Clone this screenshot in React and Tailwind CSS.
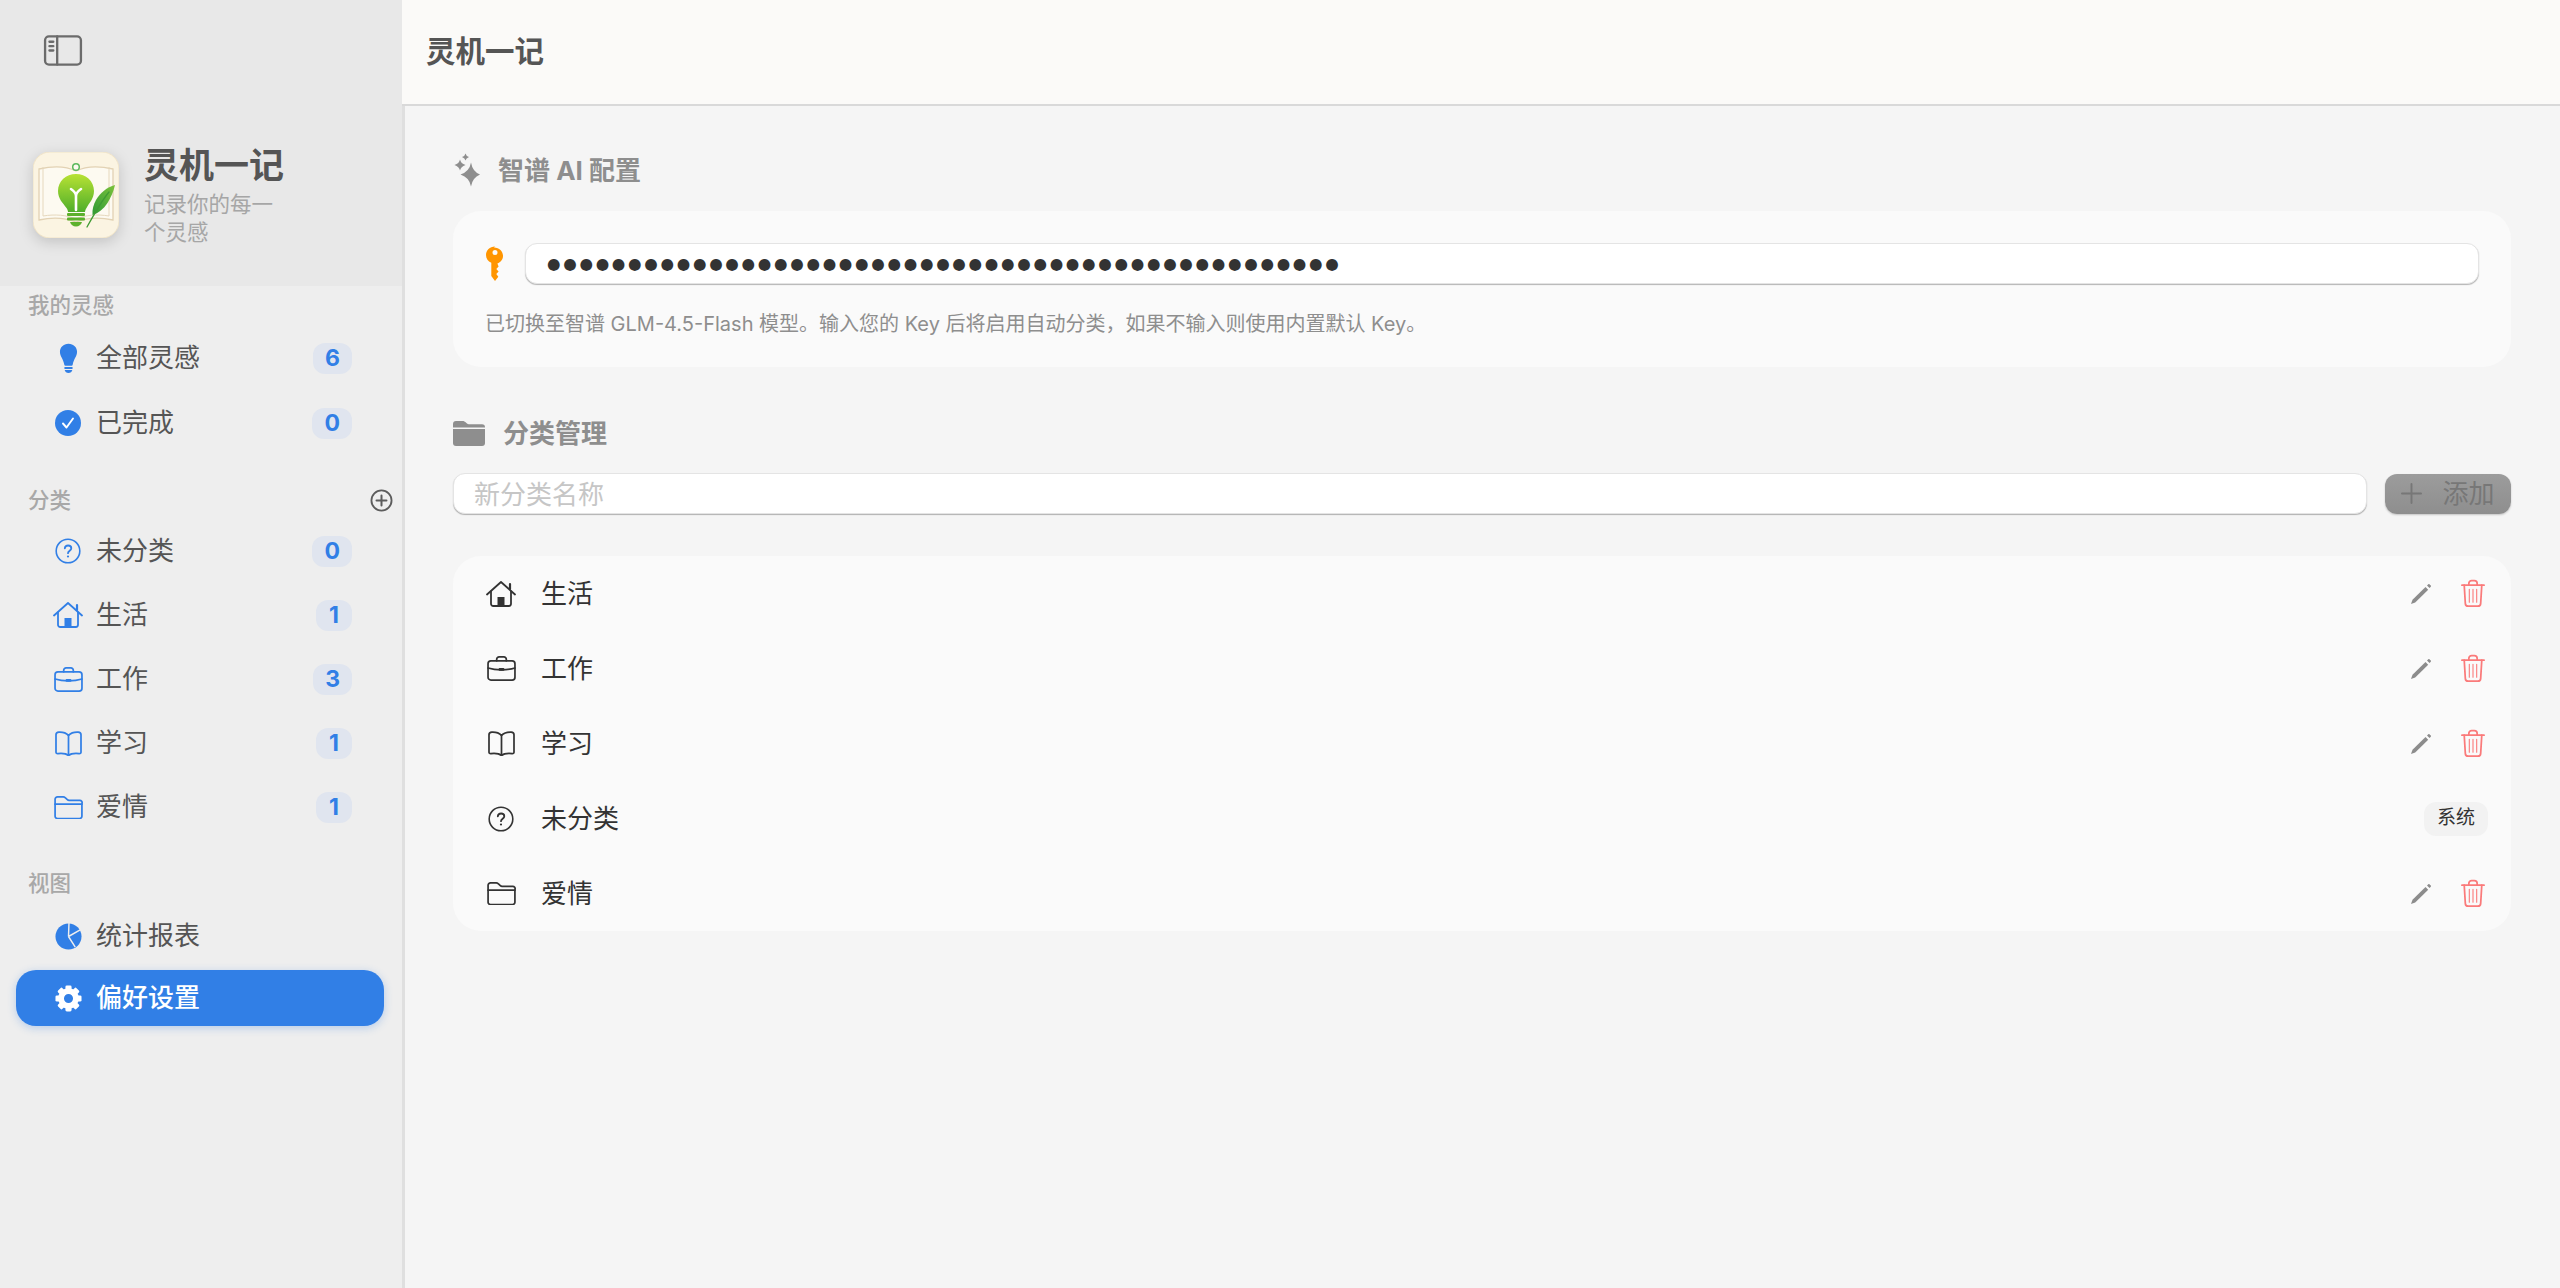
import React from "react";

const FONT = "font-['Inter','Noto_Sans_CJK_SC',sans-serif]";

const Svg = ({ className, vb = "0 0 24 24", children, fill = "none", stroke = "currentColor", sw = 1.8 }) => (
  <svg viewBox={vb} className={className} fill={fill} stroke={stroke} strokeWidth={sw} strokeLinecap="round" strokeLinejoin="round">{children}</svg>
);

const IconSidebar = ({ className }) => (
  <Svg className={className} vb="0 0 40 32" sw={2.4}>
    <rect x="1.5" y="1.5" width="37" height="29" rx="4" />
    <path d="M14 1.5v29" />
    <path d="M6 7h4M6 11.5h4M6 16h4" />
  </Svg>
);
const IconBulb = ({ className }) => (
  <svg viewBox="0 0 20 32" className={className} fill="currentColor">
    <path d="M10 0.5C4.6 0.5 1 4.4 1 9c0 5 3.6 7.5 4.6 13.6.1.6.5 1 1.100 1h6.600c.6 0 1-.4 1.100-1C15.400 16.500 19 14 19 9c0-4.600-3.600-8.500-9-8.500z" />
    <rect x="5.500" y="25" width="9" height="2" rx="1" />
    <path d="M6 28h8c-.4 2-2 3.200-4 3.200S6.400 30 6 28z" />
  </svg>
);
const IconCheck = ({ className }) => (
  <svg viewBox="0 0 26 26" className={className}>
    <circle cx="13" cy="13" r="13" fill="currentColor" />
    <path d="M8 13.500l3.500 4L18 8.500" fill="none" stroke="#fff" strokeWidth="1.900" strokeLinecap="round" strokeLinejoin="round" />
  </svg>
);
const IconQuestion = ({ className }) => (
  <svg viewBox="0 0 26 26" className={className} fill="none" stroke="currentColor" strokeWidth="1.600" strokeLinecap="round">
    <circle cx="13" cy="13" r="11.800" />
    <path d="M9.800 10.300c.2-1.700 1.500-2.800 3.300-2.800 1.900 0 3.200 1.100 3.200 2.700 0 2.500-3.300 2.500-3.300 5" strokeWidth="1.800" />
    <circle cx="13" cy="18.500" r="1.100" fill="currentColor" stroke="none" />
  </svg>
);
const IconHouse = ({ className }) => (
  <svg viewBox="0 0 30 26" className={className} fill="none" stroke="currentColor" strokeWidth="1.800" strokeLinecap="round" strokeLinejoin="round">
    <path d="M1 13.500L15 1l14 12.500" />
    <path d="M24 8V3" strokeWidth="2.200" />
    <path d="M5 10.500v12.300a2.200 2.200 0 0 0 2.200 2.200h15.600a2.200 2.200 0 0 0 2.200-2.200V10.500" />
    <rect x="11.500" y="16" width="7" height="9" fill="currentColor" stroke="none" />
  </svg>
);
const IconCase = ({ className }) => (
  <svg viewBox="0 0 30 26" className={className} fill="none" stroke="currentColor" strokeWidth="1.800" strokeLinecap="round" strokeLinejoin="round">
    <rect x="1" y="5" width="28" height="20" rx="3" />
    <path d="M10 5V3.500A2.500 2.500 0 0 1 12.500 1h5A2.500 2.500 0 0 1 20 3.500V5" />
    <path d="M1 12.500c8 2.500 20 2.500 28 0" />
    <rect x="12" y="12.500" width="6" height="2.800" rx="1" fill="currentColor" stroke="none" />
  </svg>
);
const IconBook = ({ className }) => (
  <svg viewBox="0 0 30 26" className={className} fill="none" stroke="currentColor" strokeWidth="1.800" strokeLinecap="round" strokeLinejoin="round">
    <path d="M15 4.500C12.500 2 9 1 5 1.200 3.300 1.300 2 2 2 3.800V22c0 1.200.8 1.600 2 1.500 4-.4 8.500-.2 11 2 2.500-2.200 7-2.400 11-2 1.200.1 2-.3 2-1.500V3.800C28 2 26.700 1.300 25 1.200 21 1 17.500 2 15 4.500z" />
    <path d="M15 4.500v21" />
  </svg>
);
const IconFolder = ({ className }) => (
  <svg viewBox="0 0 30 24" className={className} fill="none" stroke="currentColor" strokeWidth="1.800" strokeLinecap="round" strokeLinejoin="round">
    <path d="M1 6V3.500A2.500 2.500 0 0 1 3.500 1h6c1 0 1.600.4 2.300 1l2 1.800c.5.500 1 .7 1.800.7H26.500A2.500 2.500 0 0 1 29 8v13a2.500 2.500 0 0 1-2.500 2.500h-23A2.500 2.500 0 0 1 1 21V6z" />
    <path d="M1 8.500h28" />
  </svg>
);
const IconPie = ({ className }) => (
  <svg viewBox="0 0 28 28" className={className}>
    <circle cx="14" cy="14" r="13.500" fill="currentColor" />
    <path d="M14 14L14.500 0M14 14L27 6.500M14 14L21 25" fill="none" stroke="#eeeeee" strokeWidth="1.500" />
  </svg>
);
const GEAR_TEETH = [0, 45, 90, 135, 180, 225, 270, 315];
const IconGear = ({ className }) => (
  <svg viewBox="0 0 28 28" className={className} fill="currentColor">
    {GEAR_TEETH.map((a) => (
      <rect key={a} x="10.800" y="0.500" width="6.400" height="7" rx="1.500" transform={`rotate(${a} 14 14)`} />
    ))}
    <circle cx="14" cy="14" r="7.700" fill="none" stroke="currentColor" strokeWidth="6" />
  </svg>
);
const IconSparkles = ({ className }) => (
  <svg viewBox="0 0 26 34" className={className} fill="currentColor">
    <path d="M17 9.500Q18.500 18.500 26 21.500 18.500 24.500 17 33.500 15.500 24.500 6.500 21.500 15.500 18.500 17 9.500z" />
    <path d="M6 6.500Q6.800 10.500 11.500 12 6.800 13.500 6 17.500 5.200 13.500 .5 12 5.200 10.500 6 6.500z" />
    <path d="M11.500 .5Q12 3 15 4 12 5 11.500 7.500 11 5 8 4 11 3 11.500 .5z" />
  </svg>
);
const IconKey = ({ className }) => (
  <svg viewBox="0 0 20 36" className={className} fill="currentColor">
    <path fillRule="evenodd" d="M10 0.500C4.700 0.500 1 4.300 1 9c0 3.600 2 6.500 5.300 7.800V30l3.700 5 3.300-4.200-2-2.800 2.300-2.500-2.300-2.500 2.300-2.500-1.200-3c3.300-1.300 5.600-4.200 5.600-7.500 0-4.700-3.700-8.500-9-8.500zm0 3.500a2.500 2.500 0 1 1 0 5 2.500 2.500 0 0 1 0-5z" />
  </svg>
);
const IconFolderFill = ({ className }) => (
  <svg viewBox="0 0 32 26" className={className} fill="currentColor">
    <path d="M0 4a3 3 0 0 1 3-3h6.500c1.300 0 2 .4 2.800 1.100L14 3.500c.5.500 1 .7 1.800.7H29a3 3 0 0 1 3 3v.3H0z" />
    <path d="M0 9h32v14a3 3 0 0 1-3 3H3a3 3 0 0 1-3-3z" />
  </svg>
);
const IconPencil = ({ className }) => (
  <svg viewBox="0 0 22 22" className={className} fill="currentColor">
    <path d="M1 21l1.500-4.200L15.500 4l2.700 2.700L5.200 19.500z" />
    <path d="M17 2.500l1.300-1.300c.4-.3.800-.3 1.100 0l1.400 1.400c.3.300.3.700 0 1.100L19.500 5z" />
  </svg>
);
const IconTrash = ({ className }) => (
  <svg viewBox="0 0 26 30" className={className} fill="none" stroke="currentColor" strokeWidth="1.900" strokeLinecap="round" strokeLinejoin="round">
    <path d="M1 6h24" />
    <path d="M8.500 6V4a3 3 0 0 1 3-3h3a3 3 0 0 1 3 3v2" />
    <path d="M3.500 6l1.200 20a3 3 0 0 0 3 2.800h10.600a3 3 0 0 0 3-2.800L22.500 6" />
    <path d="M9 10.500v14M13 10.500v14M17 10.500v14" strokeWidth="1.200" />
  </svg>
);
const IconPlus = ({ className }) => (
  <svg viewBox="0 0 22 22" className={className} fill="none" stroke="currentColor" strokeWidth="2" strokeLinecap="round">
    <path d="M11 1v20M1 11h20" />
  </svg>
);
const IconPlusCircle = ({ className }) => (
  <svg viewBox="0 0 24 24" className={className} fill="none" stroke="currentColor" strokeWidth="1.900" strokeLinecap="round">
    <circle cx="12" cy="12" r="10.500" />
    <path d="M12 6.800v10.400M6.800 12h10.400" strokeWidth="2.100" />
  </svg>
);

const Logo = () => (
  <svg viewBox="0 0 86 86" className="w-[86px] h-[86px] shrink-0 drop-shadow-[0_4px_7px_rgba(0,0,0,0.16)]">
    <defs>
      <linearGradient id="bulbG" x1="0" y1="0" x2="0" y2="1">
        <stop offset="0" stopColor="#b8e234" />
        <stop offset="1" stopColor="#4fae2a" />
      </linearGradient>
      <linearGradient id="leafG" x1="1" y1="0" x2="0" y2="1">
        <stop offset="0" stopColor="#7cc23a" />
        <stop offset="1" stopColor="#2f9a36" />
      </linearGradient>
    </defs>
    <rect x="0" y="0" width="86" height="86" rx="17" fill="#fbf4e2" stroke="#f0e3c6" strokeWidth="1" />
    <path d="M6 17c13-3 27-3 37 2 10-5 24-5 37-2v51c-13-3-27-2-37 2-10-4-24-5-37-2z" fill="#fdfaf1" stroke="#e2d2b4" strokeWidth="1.300" />
    <path d="M10 15v49c12-2 24-1 33 3 9-4 21-5 33-3V15" fill="none" stroke="#e6d8bd" strokeWidth="1" />
    <circle cx="43" cy="15" r="3.300" fill="#fdfaf1" stroke="#5cb85c" strokeWidth="1.500" />
    <path d="M43 22c-10 0-18 7-18 17 0 8 5 12 8.500 17 1 1.500 1.500 3 1.500 4h17c0-1 .5-2.500 1.500-4C56 51 61 47 61 39c0-10-8-17-18-17z" fill="url(#bulbG)" />
    <path d="M43 58V44M43 44c0-3-2-5-5-7M43 44c0-3 2-5 5-7" fill="none" stroke="#fff" strokeWidth="2.600" strokeLinecap="round" />
    <rect x="34" y="61" width="18" height="3" rx="1" fill="#5cb02c" />
    <rect x="34" y="65.500" width="18" height="3" rx="1" fill="#5cb02c" />
    <path d="M37 70h12c-1 2.800-3 4.500-6 4.500s-5-1.700-6-4.500z" fill="#5cb02c" />
    <path d="M82 33c-8 2-15 8-19 15-2.500 4.500-4 9.500-3.500 15 6-2 11-6 15-12 3-5 6-11 7.500-18z" fill="url(#leafG)" />
    <path d="M76 40c-6 7-12 17-22 35" fill="none" stroke="#3f9b33" strokeWidth="1.300" strokeLinecap="round" />
  </svg>
);

const Badge = ({ n }) => (
  <span className="ml-auto h-[31px] min-w-9 px-3 flex items-center justify-center rounded-xl bg-[#e0e5ef] text-[#317fe6] text-[23px] font-bold font-['Inter',sans-serif]">{n}</span>
);

const NavItem = ({ icon: Icon, iconClass, label, count, extra = "h-16" }) => (
  <div className={`${extra} flex items-center pl-[55px] pr-[50px] text-[#555555] text-[26px]`}>
    <span className="w-[26px] h-[32px] flex items-center justify-center shrink-0 text-[#317fe6]">
      <Icon className={iconClass} />
    </span>
    <span className="ml-[15px] leading-none">{label}</span>
    {count !== undefined && <Badge n={count} />}
  </div>
);

const SectionLabel = ({ children, right }) => (
  <div className="h-7 pl-7 pr-[9px] flex items-center justify-between text-[#a8a8a8] text-[21.500px] font-medium">
    <span>{children}</span>
    {right}
  </div>
);

const Sidebar = () => (
  <aside className="w-[405px] shrink-0 h-full bg-[#eeeeee] border-r-[3px] border-[#dfdfdf] flex flex-col">
    <div className="h-[286px] bg-[#e8e8e8] shrink-0 flex flex-col pt-[35px]">
      <IconSidebar className="w-[40px] h-[31px] ml-[43px] text-[#6b6b6b]" />
      <div className="mt-[86px] pl-[33px] flex items-start gap-[25px]">
        <Logo />
        <div className="flex flex-col w-[150px] -mt-[9px]">
          <span className="text-[#555555] text-[35px] font-bold leading-[44px]">灵机一记</span>
          <span className="mt-[3px] text-[#a6a6a6] text-[21.500px] leading-[28px]">记录你的每一个灵感</span>
        </div>
      </div>
    </div>
    <div className="pt-[5px]">
      <SectionLabel>我的灵感</SectionLabel>
      <div className="mt-[7px]">
        <NavItem icon={IconBulb} iconClass="w-[19px] h-[31px]" label="全部灵感" count={6} />
        <NavItem icon={IconCheck} iconClass="w-[26px] h-[26px]" label="已完成" count={0} extra="h-[66px]" />
      </div>
    </div>
    <div className="mt-[30px]">
      <SectionLabel right={<IconPlusCircle className="w-[23px] h-[23px] text-[#5c5c5c]" />}>分类</SectionLabel>
      <div className="mt-[5px]">
        <NavItem icon={IconQuestion} iconClass="w-[26px] h-[26px]" label="未分类" count={0} />
        <NavItem icon={IconHouse} iconClass="w-[30px] h-[26px] shrink-0" label="生活" count={1} />
        <NavItem icon={IconCase} iconClass="w-[29px] h-[25px] shrink-0" label="工作" count={3} />
        <NavItem icon={IconBook} iconClass="w-[29px] h-[25px] shrink-0" label="学习" count={1} />
        <NavItem icon={IconFolder} iconClass="w-[29px] h-[23px] shrink-0" label="爱情" count={1} />
      </div>
    </div>
    <div className="mt-[30px]">
      <SectionLabel>视图</SectionLabel>
      <div className="mt-[7px]">
        <NavItem icon={IconPie} iconClass="w-[27px] h-[27px] shrink-0" label="统计报表" />
        <div className="ml-4 mr-[18px] mt-[2px] h-14 rounded-[20px] bg-[#317fe6] shadow-[0_2px_8px_rgba(49,127,230,0.3)] flex items-center pl-[39px] text-white text-[26px] font-medium">
          <span className="w-[26px] h-[32px] flex items-center justify-center shrink-0">
            <IconGear className="w-[27px] h-[27px] shrink-0" />
          </span>
          <span className="ml-[15px] leading-none">偏好设置</span>
        </div>
      </div>
    </div>
  </aside>
);

const inputClass = "bg-white rounded-xl border border-[#e4e4e4] shadow-[0_1px_1px_rgba(0,0,0,0.28)] outline-none";

const SectionTitle = ({ icon, children, gap }) => (
  <div className={`flex items-center h-9 text-[#8e8e8e] text-[26px] font-bold ${gap}`}>
    {icon}
    <span>{children}</span>
  </div>
);

const CatRow = ({ icon: Icon, iconClass, label, system }) => (
  <div className="h-[75px] flex items-center pl-[33px] pr-[23px] text-[#333333] text-[26px]">
    <span className="w-[30px] flex justify-center shrink-0">
      <Icon className={iconClass} />
    </span>
    <span className="ml-[25px] leading-none">{label}</span>
    <div className="ml-auto flex items-center">
      {system ? (
        <span className="w-16 h-[34px] rounded-xl bg-[#f2f2f2] text-[#333333] text-[19px] flex items-center justify-center">系统</span>
      ) : (
        <div className="flex items-center gap-[29px] pr-[3px]">
          <IconPencil className="w-[22px] h-[22px] text-[#8c8c8c]" />
          <IconTrash className="w-[24px] h-[29px] text-[#fa7a7a]" />
        </div>
      )}
    </div>
  </div>
);

const Main = () => (
  <main className="flex-1 h-full flex flex-col bg-[#f5f5f5] min-w-0">
    <header className="h-[106px] shrink-0 bg-[#fbfaf8] border-b-2 border-[#d9d9d9] flex items-center pl-6 pb-[2px] -ml-[3px]">
      <h1 className="text-[#555555] text-[29.500px] font-bold">灵机一记</h1>
    </header>
    <div className="pl-[48px] pr-[49px] pt-[46px]">
      <SectionTitle gap="gap-[18px]" icon={<IconSparkles className="w-[26px] h-[34px] text-[#8e8e8e] ml-px" />}>智谱 AI 配置</SectionTitle>
      <section className="mt-[23px] h-[156px] rounded-[28px] bg-[#fafafa] pt-8 pl-8 pr-8">
        <div className="flex items-center gap-[20px]">
          <IconKey className="w-[20px] h-[36px] text-[#ff9500] shrink-0" />
          <input
            readOnly
            value={"●".repeat(49)}
            className={`${inputClass} flex-1 h-[41px] px-[21px] text-[#333333] text-[15.500px] tracking-[2.690px] font-['DejaVu_Sans',sans-serif]`}
          />
        </div>
        <p className="mt-[26px] text-[#8e8e8e] text-[20px] leading-7">已切换至智谱 GLM-4.5-Flash 模型。输入您的 Key 后将启用自动分类，如果不输入则使用内置默认 Key。</p>
      </section>

      <div className="mt-[48px]">
        <SectionTitle gap="gap-[18px]" icon={<IconFolderFill className="w-[32px] h-[26px] text-[#8e8e8e]" />}>分类管理</SectionTitle>
      </div>
      <div className="mt-[22px] flex items-center gap-[18px]">
        <input
          readOnly
          placeholder="新分类名称"
          className={`${inputClass} flex-1 min-w-0 h-[41px] pl-[20px] pr-[19px] pt-[2px] text-[26px] placeholder:text-[#c6c6c6]`}
        />
        <button className="w-[126px] h-10 rounded-xl bg-[linear-gradient(#9c9c9c,#8e8e8e)] shadow-[0_1px_2px_rgba(0,0,0,0.2)] flex items-center justify-center gap-[20px] text-[#777777] text-[26px]">
          <IconPlus className="w-[21px] h-[21px]" />
          <span className="leading-none">添加</span>
        </button>
      </div>
      <section className="mt-[42px] rounded-[28px] bg-[#fafafa] overflow-hidden">
        <CatRow icon={IconHouse} iconClass="w-[30px] h-[26px]" label="生活" />
        <CatRow icon={IconCase} iconClass="w-[29px] h-[25px]" label="工作" />
        <CatRow icon={IconBook} iconClass="w-[29px] h-[25px]" label="学习" />
        <CatRow icon={IconQuestion} iconClass="w-[26px] h-[26px]" label="未分类" system />
        <CatRow icon={IconFolder} iconClass="w-[29px] h-[23px]" label="爱情" />
      </section>
    </div>
  </main>
);

export default function App() {
  return (
    <div className={`w-full h-screen flex overflow-hidden ${FONT}`}>
      <Sidebar />
      <Main />
    </div>
  );
}
